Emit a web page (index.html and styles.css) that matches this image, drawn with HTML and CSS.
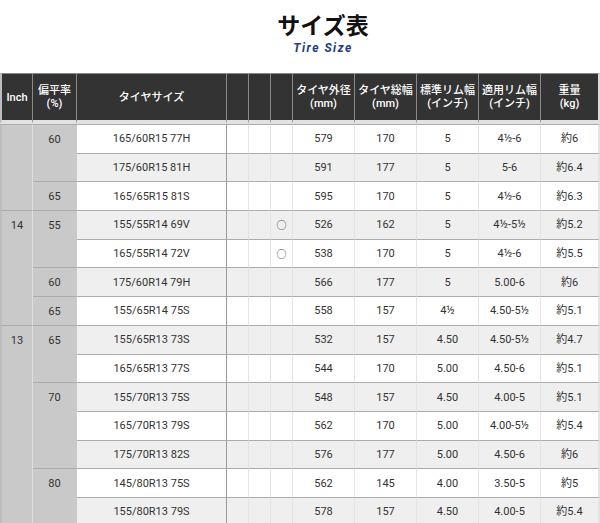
FILE: index.html
```html
<!DOCTYPE html>
<html lang="ja">
<head>
<meta charset="utf-8">
<title>サイズ表</title>
<link rel="stylesheet" href="styles.css">
</head>
<body>
<div class="title">
  <h1>サイズ表</h1>
  <p class="sub">Tire Size</p>
</div>
<table class="size">
  <colgroup>
    <col class="c-inch"><col class="c-flat"><col class="c-size">
    <col class="c-mark"><col class="c-mark"><col class="c-mark">
    <col class="c-num"><col class="c-num"><col class="c-num"><col class="c-num"><col class="c-wt">
  </colgroup>
  <thead>
    <tr>
      <th>Inch</th>
      <th>偏平率<br>(%)</th>
      <th class="sep">タイヤサイズ</th>
      <th></th><th></th><th></th>
      <th>タイヤ外径<br>(mm)</th>
      <th>タイヤ総幅<br>(mm)</th>
      <th>標準リム幅<br>(インチ)</th>
      <th>適用リム幅<br>(インチ)</th>
      <th class="last">重量<br>(kg)</th>
    </tr>
  </thead>
  <tbody>
    <tr class="first">
      <td class="grp inch" rowspan="3"></td>
      <td class="grp flat" rowspan="2">60</td>
      <td class="sz">165/60R15 77H</td><td class="mk"></td><td class="mk"></td><td class="mk"></td>
      <td>579</td><td>170</td><td>5</td><td>4½-6</td><td class="last">約6</td>
    </tr>
    <tr class="alt">
      <td class="sz">175/60R15 81H</td><td class="mk"></td><td class="mk"></td><td class="mk"></td>
      <td>591</td><td>177</td><td>5</td><td>5-6</td><td class="last">約6.4</td>
    </tr>
    <tr>
      <td class="grp flat">65</td>
      <td class="sz">165/65R15 81S</td><td class="mk"></td><td class="mk"></td><td class="mk"></td>
      <td>595</td><td>170</td><td>5</td><td>4½-6</td><td class="last">約6.3</td>
    </tr>
    <tr class="alt">
      <td class="grp inch" rowspan="4">14</td>
      <td class="grp flat" rowspan="2">55</td>
      <td class="sz">155/55R14 69V</td><td class="mk"></td><td class="mk"></td><td class="mk"><span class="circ">○</span></td>
      <td>526</td><td>162</td><td>5</td><td>4½-5½</td><td class="last">約5.2</td>
    </tr>
    <tr>
      <td class="sz">165/55R14 72V</td><td class="mk"></td><td class="mk"></td><td class="mk"><span class="circ">○</span></td>
      <td>538</td><td>170</td><td>5</td><td>4½-6</td><td class="last">約5.5</td>
    </tr>
    <tr class="alt">
      <td class="grp flat">60</td>
      <td class="sz">175/60R14 79H</td><td class="mk"></td><td class="mk"></td><td class="mk"></td>
      <td>566</td><td>177</td><td>5</td><td>5.00-6</td><td class="last">約6</td>
    </tr>
    <tr>
      <td class="grp flat">65</td>
      <td class="sz">155/65R14 75S</td><td class="mk"></td><td class="mk"></td><td class="mk"></td>
      <td>558</td><td>157</td><td>4½</td><td>4.50-5½</td><td class="last">約5.1</td>
    </tr>
    <tr class="alt">
      <td class="grp inch" rowspan="7">13</td>
      <td class="grp flat" rowspan="2">65</td>
      <td class="sz">155/65R13 73S</td><td class="mk"></td><td class="mk"></td><td class="mk"></td>
      <td>532</td><td>157</td><td>4.50</td><td>4.50-5½</td><td class="last">約4.7</td>
    </tr>
    <tr>
      <td class="sz">165/65R13 77S</td><td class="mk"></td><td class="mk"></td><td class="mk"></td>
      <td>544</td><td>170</td><td>5.00</td><td>4.50-6</td><td class="last">約5.1</td>
    </tr>
    <tr class="alt">
      <td class="grp flat" rowspan="3">70</td>
      <td class="sz">155/70R13 75S</td><td class="mk"></td><td class="mk"></td><td class="mk"></td>
      <td>548</td><td>157</td><td>4.50</td><td>4.00-5</td><td class="last">約5.1</td>
    </tr>
    <tr>
      <td class="sz">165/70R13 79S</td><td class="mk"></td><td class="mk"></td><td class="mk"></td>
      <td>562</td><td>170</td><td>5.00</td><td>4.00-5½</td><td class="last">約5.4</td>
    </tr>
    <tr class="alt">
      <td class="sz">175/70R13 82S</td><td class="mk"></td><td class="mk"></td><td class="mk"></td>
      <td>576</td><td>177</td><td>5.00</td><td>4.50-6</td><td class="last">約6</td>
    </tr>
    <tr>
      <td class="grp flat" rowspan="2">80</td>
      <td class="sz">145/80R13 75S</td><td class="mk"></td><td class="mk"></td><td class="mk"></td>
      <td>562</td><td>145</td><td>4.00</td><td>3.50-5</td><td class="last">約5</td>
    </tr>
    <tr class="alt">
      <td class="sz">155/80R13 79S</td><td class="mk"></td><td class="mk"></td><td class="mk"></td>
      <td>578</td><td>157</td><td>4.50</td><td>4.00-5</td><td class="last">約5.4</td>
    </tr>
  </tbody>
</table>
</body>
</html>
```

FILE: styles.css
```css
html, body {
  margin: 0;
  padding: 0;
  background: #fff;
}

body {
  font-family: Roboto, "Noto Sans CJK JP", sans-serif;
  color: #333;
  width: 600px;
  overflow: hidden;
}

.title {
  padding-left: 46px;
  text-align: center;
}

.title h1 {
  margin: 10px 0 0;
  font-family: "Noto Sans CJK JP", sans-serif;
  font-size: 23px;
  line-height: 28px;
  font-weight: 700;
  color: #111;
}

.title .sub {
  margin: 3px 0 0;
  font-family: Roboto, sans-serif;
  font-size: 12px;
  line-height: 14px;
  font-style: italic;
  font-weight: 700;
  letter-spacing: 1.5px;
  color: #1d3c82;
}

.size {
  margin-top: 18px;
  width: 600px;
  table-layout: fixed;
  border-collapse: separate;
  border-spacing: 0;
  font-size: 11px;
  line-height: 13px;
  color: #333;
}

.c-inch { width: 33px; }
.c-flat { width: 44px; }
.c-size { width: 150px; }
.c-mark { width: 22px; }
.c-num { width: 62px; }
.c-wt { width: 59px; }

.size th {
  height: 51px;
  padding: 0;
  background: #333;
  color: #fff;
  font-family: Roboto, "Noto Sans CJK JP", sans-serif;
  font-weight: 500;
  font-size: 11px;
  line-height: 13px;
  text-align: center;
  vertical-align: middle;
  border-top: 1px solid #8a8a8a;
  border-right: 1px solid #8a8a8a;
  border-bottom: 4px solid #e2e2e2;
  box-sizing: border-box;
}

.size th:first-child {
  border-left: 2px solid #bdbdbd;
}

.size th.last {
  border-right: 2px solid #dcdcdc;
}

.size tbody tr {
  height: 28.7px;
}

.size tbody tr.first {
  height: 29.7px;
}

.size td {
  padding: 0;
  text-align: center;
  vertical-align: middle;
  background: #fff;
  border-bottom: 1px solid #acacac;
  border-right: 1px solid #e4e4e4;
}

.size tr.alt td {
  background: #efefef;
}

.size tr.first td {
  border-top: 1px solid #acacac;
}

.size td.sz {
  border-right: 1px solid #9a9a9a;
}

.size td.last {
  border-right: 2px solid #e4e4e4;
}

.size td.grp,
.size tr.alt td.grp {
  background: #c9c9c9;
  vertical-align: top;
  padding-top: 8px;
}

.size td.inch {
  border-left: 2px solid #bdbdbd;
  border-right: 1px solid #dedede;
}

.size td.flat {
  border-right: 1px solid #c9c9c9;
}

.circ {
  font-family: "Noto Sans CJK JP", sans-serif;
  font-size: 10px;
  color: #444;
}
```
